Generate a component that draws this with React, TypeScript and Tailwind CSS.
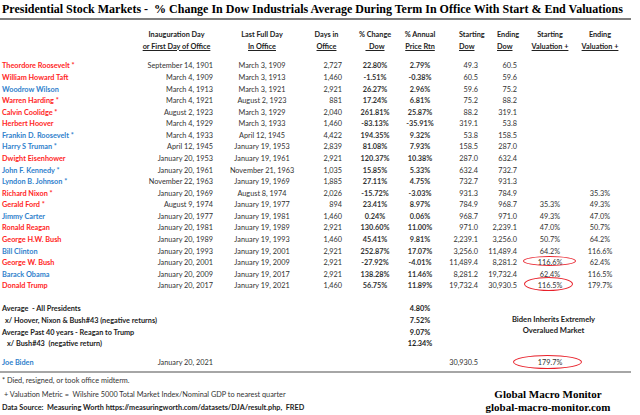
import type { ReactNode } from 'react'

const RED = 'text-[#ff2525]'
const BLUE = 'text-[#2f7fcc]'

type Row = {
  name: string
  red: boolean
  start: string
  end: string
  days: string
  chg: string
  ann: string
  sDow: string
  eDow: string
  sVal?: string
  eVal?: string
  ring?: 'a' | 'b'
}

const rows: Row[] = [
  { name: 'Theordore Roosevelt *', red: true, start: 'September 14, 1901', end: 'March 3, 1909', days: '2,727', chg: '22.80%', ann: '2.79%', sDow: '49.3', eDow: '60.5' },
  { name: 'William Howard Taft', red: true, start: 'March 4, 1909', end: 'March 3, 1913', days: '1,460', chg: '-1.51%', ann: '-0.38%', sDow: '60.5', eDow: '59.6' },
  { name: 'Woodrow Wilson', red: false, start: 'March 4, 1913', end: 'March 3, 1921', days: '2,921', chg: '26.27%', ann: '2.96%', sDow: '59.6', eDow: '75.2' },
  { name: 'Warren Harding *', red: true, start: 'March 4, 1921', end: 'August 2, 1923', days: '881', chg: '17.24%', ann: '6.81%', sDow: '75.2', eDow: '88.2' },
  { name: 'Calvin Coolidge *', red: true, start: 'August 2, 1923', end: 'March 3, 1929', days: '2,040', chg: '261.81%', ann: '25.87%', sDow: '88.2', eDow: '319.1' },
  { name: 'Herbert Hoover', red: true, start: 'March 4, 1929', end: 'March 3, 1933', days: '1,460', chg: '-83.13%', ann: '-35.91%', sDow: '319.1', eDow: '53.8' },
  { name: 'Frankin D. Roosevelt *', red: false, start: 'March 4, 1933', end: 'April 12, 1945', days: '4,422', chg: '194.35%', ann: '9.32%', sDow: '53.8', eDow: '158.5' },
  { name: 'Harry S Truman *', red: false, start: 'April 12, 1945', end: 'January 19, 1953', days: '2,839', chg: '81.08%', ann: '7.93%', sDow: '158.5', eDow: '287.0' },
  { name: 'Dwight Eisenhower', red: true, start: 'January 20, 1953', end: 'January 19, 1961', days: '2,921', chg: '120.37%', ann: '10.38%', sDow: '287.0', eDow: '632.4' },
  { name: 'John F. Kennedy *', red: false, start: 'January 20, 1961', end: 'November 21, 1963', days: '1,035', chg: '15.85%', ann: '5.33%', sDow: '632.4', eDow: '732.7' },
  { name: 'Lyndon B. Johnson *', red: false, start: 'November 22, 1963', end: 'January 19, 1969', days: '1,885', chg: '27.11%', ann: '4.75%', sDow: '732.7', eDow: '931.3' },
  { name: 'Richard Nixon *', red: true, start: 'January 20, 1969', end: 'August 8, 1974', days: '2,026', chg: '-15.72%', ann: '-3.03%', sDow: '931.3', eDow: '784.9', eVal: '35.3%' },
  { name: 'Gerald Ford *', red: true, start: 'August 9, 1974', end: 'January 19, 1977', days: '894', chg: '23.41%', ann: '8.97%', sDow: '784.9', eDow: '968.7', sVal: '35.3%', eVal: '49.3%' },
  { name: 'Jimmy Carter', red: false, start: 'January 20, 1977', end: 'January 19, 1981', days: '1,460', chg: '0.24%', ann: '0.06%', sDow: '968.7', eDow: '971.0', sVal: '49.3%', eVal: '47.0%' },
  { name: 'Ronald Reagan', red: true, start: 'January 20, 1981', end: 'January 19, 1989', days: '2,921', chg: '130.60%', ann: '11.00%', sDow: '971.0', eDow: '2,239.1', sVal: '47.0%', eVal: '50.7%' },
  { name: 'George H.W. Bush', red: true, start: 'January 20, 1989', end: 'January 19, 1993', days: '1,460', chg: '45.41%', ann: '9.81%', sDow: '2,239.1', eDow: '3,256.0', sVal: '50.7%', eVal: '64.2%' },
  { name: 'Bill Clinton', red: false, start: 'January 20, 1993', end: 'January 19, 2001', days: '2,921', chg: '252.87%', ann: '17.07%', sDow: '3,256.0', eDow: '11,489.4', sVal: '64.2%', eVal: '116.6%' },
  { name: 'George W. Bush', red: true, start: 'January 20, 2001', end: 'January 19, 2009', days: '2,921', chg: '-27.92%', ann: '-4.01%', sDow: '11,489.4', eDow: '8,281.2', sVal: '116.6%', eVal: '62.4%', ring: 'a' },
  { name: 'Barack Obama', red: false, start: 'January 20, 2009', end: 'January 19, 2017', days: '2,921', chg: '138.28%', ann: '11.46%', sDow: '8,281.2', eDow: '19,732.4', sVal: '62.4%', eVal: '116.5%' },
  { name: 'Donald Trump', red: true, start: 'January 20, 2017', end: 'January 19, 2021', days: '1,460', chg: '56.75%', ann: '11.89%', sDow: '19,732.4', eDow: '30,930.5', sVal: '116.5%', eVal: '179.7%', ring: 'b' },
]

const grid = 'grid grid-cols-[140px_73px_98px_31px_66px_24px_46px_39px_66px_34px] h-[11.58px] leading-[11.58px] whitespace-nowrap'

function C({ children, className = '' }: { children?: ReactNode; className?: string }) {
  return <div className={`flex justify-center ${className}`}>{children}</div>
}

function R({ children, className = '' }: { children?: ReactNode; className?: string }) {
  return <div className={`flex justify-end ${className}`}>{children}</div>
}

export default function App() {
  return (
    <div className="w-[640px] h-[415px] overflow-hidden bg-white font-['Lato',sans-serif] text-[7.3px] text-[#333333]">
      {/* Title */}
      <div className="h-[18px] flex items-center pl-[2px] font-['Liberation_Serif',serif] font-bold text-[12px] text-black whitespace-pre">
        Presidential Stock Markets -  % Change In Dow Industrials Average During Term In Office With Start &amp; End Valuations
      </div>
      <div className="h-[2px] w-[631px] bg-[#7f7f7f]" />

      {/* Column headers */}
      <div className="mt-[9px] font-bold text-[#222222]">
        <div className={grid}>
          <div />
          <C>Inauguration Day</C>
          <C>Last Full Day</C>
          <C>Days in</C>
          <C>% Change</C>
          <C>% Annual</C>
          <div className="pl-[27px]">Starting</div>
          <div className="pl-[19px]">Ending</div>
          <C>Starting</C>
          <C>Ending</C>
        </div>
        <div className={grid}>
          <div />
          <C><span className="underline">or First Day of Office</span></C>
          <C><span className="underline">In Office</span></C>
          <C><span className="underline">Office</span></C>
          <C><span className="underline whitespace-pre">  Dow</span></C>
          <C><span className="underline">Price Rtn</span></C>
          <div className="pl-[27px]"><span className="underline">Dow</span></div>
          <div className="pl-[19px]"><span className="underline">Dow</span></div>
          <C><span className="underline">Valuation +</span></C>
          <C><span className="underline">Valuation +</span></C>
        </div>
      </div>

      {/* Presidents */}
      <div className="mt-[8.2px]">
        {rows.map((r) => (
          <div key={r.name} className={grid}>
            <div className={`pl-[2px] font-bold ${r.red ? RED : BLUE}`}>{r.name}</div>
            <R>{r.start}</R>
            <C>{r.end}</C>
            <R>{r.days}</R>
            <C className="font-bold">{r.chg}</C>
            <C className="font-bold">{r.ann}</C>
            <R>{r.sDow}</R>
            <R>{r.eDow}</R>
            <C className="relative">
              {r.sVal}
              {r.ring === 'a' && (
                <span className="absolute left-[6px] top-[-1px] h-[10px] w-[53px] rounded-[50%] border-[1.5px] border-[#e8202a]" />
              )}
              {r.ring === 'b' && (
                <span className="absolute left-[7px] top-[-3px] h-[14px] w-[49px] rounded-[50%] border-[1.5px] border-[#e8202a]" />
              )}
            </C>
            <C>{r.eVal}</C>
          </div>
        ))}
      </div>

      {/* Averages */}
      <div className="mt-[11.58px] font-bold text-[#222222]">
        <div className={grid}>
          <div className="col-span-5 pl-[2px] whitespace-pre">Average  - All Presidents</div>
          <C>4.80%</C>
        </div>
        <div className={grid}>
          <div className="col-span-5 pl-[5px]">x/ Hoover, Nixon &amp; Bush#43 (negative returns)</div>
          <C>7.52%</C>
        </div>
        <div className={grid}>
          <div className="col-span-5 pl-[2px]">Average Past 40 years - Reagan to Trump</div>
          <C>9.07%</C>
        </div>
        <div className={grid}>
          <div className="col-span-5 pl-[7px] whitespace-pre">x/ Bush#43  (negative return)</div>
          <C>12.34%</C>
        </div>
      </div>

      {/* Biden */}
      <div className="relative">
        <div className="absolute left-[490px] top-[-35.5px] w-[127px] text-center font-bold text-[7.6px] leading-[11px] text-[#222222]">
          <div>Biden Inherits Extremely</div>
          <div>Overalued Market</div>
        </div>
      </div>
      <div className={`${grid} mt-[6.8px]`}>
        <div className={`pl-[2px] font-bold ${BLUE}`}>Joe Biden</div>
        <R>January 20, 2021</R>
        <div />
        <div />
        <div />
        <div />
        <R>30,930.5</R>
        <div />
        <C className="relative">
          179.7%
          <span className="absolute left-[-4px] top-[-2px] h-[14px] w-[69px] rounded-[50%] border-[1.5px] border-[#e8202a]" />
        </C>
        <div />
      </div>
      <div className="mt-[2.6px] h-[2px] w-[631px] bg-[#a6a6a6]" />

      {/* Footnotes */}
      <div className="mt-[1px] flex leading-[13.8px] whitespace-pre">
        <div className="w-[470px]">
          <div className="pl-[2px]">* Died, resigned, or took office midterm.</div>
          <div className="pl-[4px]">+ Valuation Metric =  Wilshire 5000 Total Market Index/Nominal GDP to nearest quarter</div>
          <div className="pl-[2px] font-bold text-[#222222]">Data Source:  Measuring Worth https://measuringworth.com/datasets/DJA/result.php,  FRED</div>
        </div>
        <div className="w-[156px] pt-[13.8px] text-center font-['Liberation_Serif',serif] font-bold text-[11px] text-black">
          <div>Global Macro Monitor</div>
          <div>global-macro-monitor.com</div>
        </div>
      </div>
    </div>
  )
}
